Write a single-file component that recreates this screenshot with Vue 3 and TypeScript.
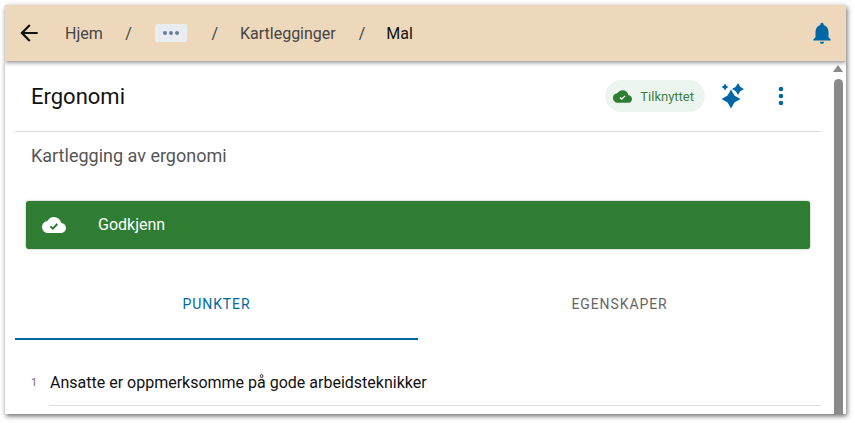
<script setup lang="ts">
const crumbs = ['Hjem', 'Kartlegginger']
</script>

<template>
  <div class="page">
    <div class="window">
      <header class="topbar">
        <svg class="back" viewBox="0 0 24 24" width="26" height="26">
          <path d="M20 11H7.83l5.59-5.59L12 4l-8 8 8 8 1.41-1.41L7.83 13H20v-2z" fill="#111" />
        </svg>
        <nav class="crumbs">
          <span class="crumb first">{{ crumbs[0] }}</span>
          <span class="sep s1">/</span>
          <span class="more"><i></i><i></i><i></i></span>
          <span class="sep s2">/</span>
          <span class="crumb">{{ crumbs[1] }}</span>
          <span class="sep s3">/</span>
          <span class="crumb current">Mal</span>
        </nav>
        <svg class="bell" viewBox="0 0 24 24" width="26" height="26">
          <path fill="#0067a5" d="M12 22c1.1 0 2-.9 2-2h-4c0 1.1.9 2 2 2zm6-6v-5c0-3.07-1.63-5.64-4.5-6.32V4c0-.83-.67-1.5-1.5-1.5s-1.5.67-1.5 1.5v.68C7.64 5.36 6 7.92 6 11v5l-2 2v1h16v-1l-2-2z" />
        </svg>
      </header>

      <div class="body">
        <main class="content">
          <div class="title-row">
            <h1>Ergonomi</h1>
            <span class="status">
              <svg viewBox="0 0 24 24" width="19" height="19">
                <path fill="#2e7d32" d="M19.35 10.04A7.49 7.49 0 0 0 12 4C9.11 4 6.6 5.64 5.35 8.04A5.994 5.994 0 0 0 0 14c0 3.31 2.69 6 6 6h13c2.76 0 5-2.24 5-5 0-2.64-2.05-4.78-4.65-4.96z" />
                <path fill="none" stroke="#fff" stroke-width="1.6" d="M8.8 13.2l2.2 2.2 4.2-4.2" />
              </svg>
              Tilknyttet
            </span>
            <svg class="sparkle" viewBox="0 0 26 26" width="26" height="26">
              <path fill="#0067a5" d="M11 6.5L14.4 12.6L20.5 16L14.4 19.4L11 25.5L7.6 19.4L1.5 16L7.6 12.6Z" />
              <path fill="#0067a5" d="M18 0L20.2 3.8L24 6L20.2 8.2L18 12L15.8 8.2L12 6L15.8 3.8Z" />
              <path fill="#0067a5" d="M5 .5L6.3 2.7L8.5 4L6.3 5.3L5 7.5L3.7 5.3L1.5 4L3.7 2.7Z" />
            </svg>
            <svg class="dots" viewBox="0 0 24 24" width="24" height="24">
              <circle cx="12" cy="5" r="2.3" fill="#0067a5" />
              <circle cx="12" cy="12" r="2.3" fill="#0067a5" />
              <circle cx="12" cy="19" r="2.3" fill="#0067a5" />
            </svg>
          </div>

          <p class="subtitle">Kartlegging av ergonomi</p>

          <button class="approve">
            <svg viewBox="0 0 24 24" width="24" height="24">
              <path fill="#fff" d="M19.35 10.04A7.49 7.49 0 0 0 12 4C9.11 4 6.6 5.64 5.35 8.04A5.994 5.994 0 0 0 0 14c0 3.31 2.69 6 6 6h13c2.76 0 5-2.24 5-5 0-2.64-2.05-4.78-4.65-4.96z" />
              <path fill="none" stroke="#2e7d32" stroke-width="2" d="M8.5 13.2l2.4 2.4 4.4-4.6" />
            </svg>
            <span>Godkjenn</span>
          </button>

          <div class="tabs">
            <div class="tab active">PUNKTER</div>
            <div class="tab">EGENSKAPER</div>
          </div>

          <div class="item">
            <span class="num">1</span>
            <span class="text">Ansatte er oppmerksomme på gode arbeidsteknikker</span>
          </div>
        </main>

        <aside class="scrollbar">
          <span class="arrow"></span>
          <span class="thumb"></span>
        </aside>
      </div>
    </div>
  </div>
</template>

<style>
html,
body {
  background: #fff;
}
</style>

<style scoped>
.page {
  height: 423px;
  box-sizing: border-box;
  padding: 5px 0 0 5px;
}

.window {
  width: 841px;
  height: 409px;
  display: flex;
  flex-direction: column;
  background: #fff;
  box-shadow: 1px 2px 5px rgba(0, 0, 0, 0.6);
  font-family: Roboto, sans-serif;
  overflow: hidden;
}

.topbar {
  height: 56px;
  flex: none;
  display: flex;
  align-items: center;
  padding: 0 11px;
  background: #eed8bc;
  box-shadow: 0 2px 4px rgba(0, 0, 0, 0.4);
  position: relative;
}

.crumbs {
  display: flex;
  align-items: center;
  flex: 1;
  margin-left: 23px;
  font-size: 16px;
  color: #444;
}

.crumb.current {
  color: #111;
}

.sep {
  color: #444;
}

.s1 {
  margin-left: 22.5px;
}

.more {
  display: flex;
  align-items: center;
  justify-content: center;
  gap: 2px;
  width: 32px;
  height: 18px;
  margin-left: 23.5px;
  background: #e9edf2;
  border-radius: 2px;
}

.more i {
  width: 4px;
  height: 4px;
  border-radius: 50%;
  background: #6b7d96;
}

.s2 {
  margin-left: 24px;
  margin-right: 22px;
}

.s3 {
  margin-left: 23px;
  margin-right: 21px;
}

.body {
  flex: 1;
  min-height: 0;
  display: flex;
}

.content {
  width: 806px;
  margin-left: 10px;
  flex: none;
  overflow: hidden;
}

.title-row {
  height: 70px;
  display: flex;
  align-items: center;
  padding: 0 28px 0 16px;
  border-bottom: 1px solid #ddd;
}

h1 {
  flex: 1;
  margin: 0;
  font-size: 22px;
  font-weight: 400;
  color: #111;
}

.status {
  display: flex;
  align-items: center;
  gap: 8px;
  height: 32px;
  padding: 0 11px 0 8px;
  border-radius: 16px;
  background: #edf5ef;
  color: #3c7f45;
  font-size: 13px;
}

.sparkle {
  margin-left: 15px;
}

.dots {
  margin-left: 23px;
}

.subtitle {
  margin: 14px 0 0 16px;
  font-size: 18px;
  line-height: 20px;
  color: #555;
}

.approve {
  width: 784px;
  height: 48px;
  margin: 35px 0 0 11px;
  padding: 0 0 0 16px;
  display: flex;
  align-items: center;
  border: 0;
  border-radius: 3px;
  background: #2e7d32;
  box-shadow: 0 0 2px rgba(0, 0, 0, 0.4);
  color: #fff;
  font-family: inherit;
  font-size: 16px;
}

.approve span {
  margin: 0 0 2px 32px;
}

.tabs {
  display: flex;
  margin-top: 21px;
}

.tab {
  width: 403px;
  height: 70px;
  box-sizing: border-box;
  display: flex;
  align-items: center;
  justify-content: center;
  border-bottom: 2px solid transparent;
  font-size: 14px;
  letter-spacing: 0.9px;
  color: #666;
}

.tab.active {
  color: #0067a5;
  border-bottom-color: #0067a5;
}

.item {
  display: flex;
  align-items: center;
  height: 66px;
  box-sizing: border-box;
  padding-top: 18px;
  margin-left: 16px;
  position: relative;
}

.num {
  width: 19px;
  font-size: 11px;
  color: #7a6a80;
}

.text {
  font-size: 16px;
  color: #111;
}

.item::after {
  content: '';
  position: absolute;
  left: 18px;
  right: 0;
  bottom: 0;
  border-bottom: 1px solid #ddd;
}

.scrollbar {
  flex: 1;
  display: flex;
  flex-direction: column;
  align-items: center;
  padding: 4px 4px 0 12px;
}

.arrow {
  width: 0;
  height: 0;
  border-left: 5px solid transparent;
  border-right: 5px solid transparent;
  border-bottom: 7px solid #8a8a8a;
}

.thumb {
  width: 9px;
  flex: 1;
  margin-top: 7px;
  border-radius: 5px 5px 0 0;
  background: #8a8a8a;
}
</style>
